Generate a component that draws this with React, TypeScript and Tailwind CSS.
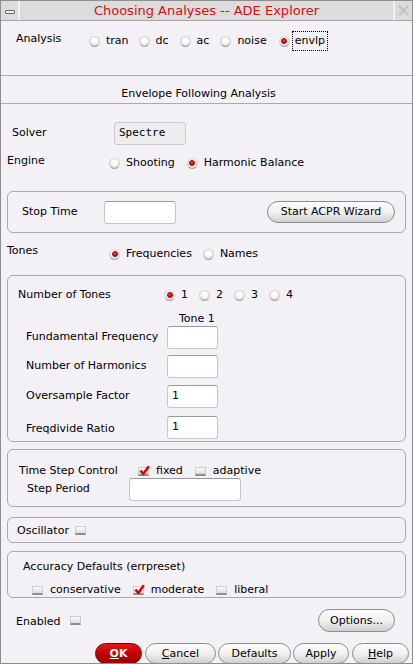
import React from 'react'

const Radio = ({ on }: { on?: boolean }) => (
  <span className="inline-flex h-[11px] w-[11px] shrink-0 items-center justify-center rounded-full border border-[#d2d2d2] border-b-[#a4a4a4] bg-[radial-gradient(circle_at_50%_35%,#ffffff_30%,#ececec_55%,#b4b4b4_100%)]">
    {on && <span className="h-[6px] w-[6px] rounded-full border border-[#8a0000] bg-[radial-gradient(circle_at_40%_35%,#ff4040,#d80000_70%)]" />}
  </span>
)

const Check = ({ on }: { on?: boolean }) => (
  <span className="relative inline-block h-[9px] w-[11px] shrink-0 border border-[#cdcdcd] border-b-2 border-b-[#8e8e8e] bg-gradient-to-b from-[#fbfbfb] to-[#dcdcdc]">
    {on && (
      <svg className="absolute left-[0px] top-[-3px]" width="11" height="11" viewBox="0 0 11 11">
        <path d="M1.5 5.5 L4.3 9 L9.8 1.2" stroke="#d80000" strokeWidth="2.4" fill="none" strokeLinejoin="round" />
      </svg>
    )}
  </span>
)

const Option = ({ on, label }: { on?: boolean; label: string }) => (
  <span className="flex items-center">
    <Radio on={on} />
    <span className="ml-[6px] leading-[14px]">{label}</span>
  </span>
)

const Box = ({ on, label }: { on?: boolean; label: string }) => (
  <span className="flex items-center">
    <Check on={on} />
    <span className="ml-[7px] leading-[14px]">{label}</span>
  </span>
)

const Field = ({ className, value }: { className: string; value?: string }) => (
  <div className={`flex h-[23px] items-center rounded-[3px] border border-[#c6c6c6] border-t-[#9a9a9a] bg-white pl-[4px] ${className}`}>
    {value}
  </div>
)

const Pill = ({ className, children }: { className: string; children: React.ReactNode }) => (
  <div className={`flex items-center justify-center rounded-full border border-[#8c8c8c] bg-gradient-to-b from-[#fdfdfd] via-[#f0f0f0] to-[#cfcfcf] leading-[14px] ${className}`}>
    {children}
  </div>
)

const Group = ({ className, children }: { className: string; children: React.ReactNode }) => (
  <div className={`ml-[6px] w-[399px] shrink-0 rounded-[6px] border border-[#a9a9a9] ${className}`}>{children}</div>
)

export default function App() {
  return (
    <div className="flex h-[664px] w-[413px] flex-col overflow-hidden border border-[#8e8e8e] bg-[#f4f1f6] font-['DejaVu_Sans',sans-serif] text-[11px] text-black">
      {/* title bar */}
      <div className="flex h-[20px] shrink-0 border-b border-[#a6a6a6] bg-[#dcdcdc]">
        <div className="flex w-[19px] items-center justify-center border-r-2 border-r-[#f2f2f2]">
          <span className="mt-[2px] h-[4px] w-[10px] rounded-[1px] border border-[#6e6e6e] bg-[#efefef]" />
        </div>
        <div className="flex flex-1 items-center justify-center text-[13px] text-[#d01010]">Choosing Analyses -- ADE Explorer</div>
        <div className="flex w-[19px] items-center justify-center border-l-2 border-l-[#f2f2f2]">
          <svg width="11" height="11" viewBox="0 0 11 11">
            <path d="M1 1 L10 10 M10 1 L1 10" stroke="#b8b8b8" strokeWidth="2.4" strokeDasharray="1.2 0.8" />
          </svg>
        </div>
      </div>

      {/* analysis */}
      <div className="flex h-[55px] shrink-0 items-start border-b border-[#ababab]">
        <div className="ml-[15px] mt-[11px] w-[73px] leading-[13px]">Analysis</div>
        <div className="mt-[10px] flex h-[20px] items-center">
          <Option label="tran" />
          <span className="w-[10px]" />
          <Option label="dc" />
          <span className="w-[11px]" />
          <Option label="ac" />
          <span className="w-[11px]" />
          <Option label="noise" />
          <span className="w-[12px]" />
          <Radio on />
          <span className="ml-[2px] flex h-[20px] items-center border border-dotted border-black px-[2px]">envlp</span>
        </div>
      </div>

      <div className="h-[28px] shrink-0 border-b border-[#ababab] pr-[16px] pt-[11px] text-center leading-[14px]">Envelope Following Analysis</div>

      {/* solver / engine */}
      <div className="mt-[18px] flex h-[23px] shrink-0 items-center pl-[11px]">
        <div className="w-[102px]">Solver</div>
        <div className="flex h-[23px] w-[72px] items-center rounded-[3px] border border-[#c9c9c9] bg-[#ededed] pl-[4px] font-['DejaVu_Sans_Mono',monospace]">Spectre</div>
      </div>
      <div className="mt-[9px] flex h-[16px] shrink-0 items-start pl-[6px]">
        <div className="w-[102px] leading-[14px]">Engine</div>
        <div className="mt-[2px] flex items-center">
          <Option label="Shooting" />
          <span className="w-[12px]" />
          <Option on label="Harmonic Balance" />
        </div>
      </div>

      <Group className="mt-[21px] flex h-[42px] items-center pl-[14px] pr-[10px]">
        <div className="w-[82px]">Stop Time</div>
        <Field className="w-[72px]" />
        <Pill className="ml-auto h-[22px] w-[128px]">Start ACPR Wizard</Pill>
      </Group>

      {/* tones */}
      <div className="mt-[11px] flex h-[17px] shrink-0 items-start pl-[6px]">
        <div className="w-[102px] leading-[14px]">Tones</div>
        <div className="mt-[3px] flex items-center">
          <Option on label="Frequencies" />
          <span className="w-[11px]" />
          <Option label="Names" />
        </div>
      </div>

      <Group className="mt-[14px] h-[167px] pl-[10px]">
        <div className="mt-[12px] flex h-[14px] items-center">
          <div className="w-[146px]">Number of Tones</div>
          <Option on label="1" />
          <span className="w-[11px]" />
          <Option label="2" />
          <span className="w-[11px]" />
          <Option label="3" />
          <span className="w-[11px]" />
          <Option label="4" />
        </div>
        <div className="ml-[161px] mt-[10px] leading-[14px]">Tone 1</div>
        <div className="flex items-center pl-[8px]">
          <div className="w-[141px]">Fundamental Frequency</div>
          <Field className="w-[51px]" />
        </div>
        <div className="mt-[6px] flex items-center pl-[8px]">
          <div className="w-[141px]">Number of Harmonics</div>
          <Field className="w-[51px]" />
        </div>
        <div className="mt-[7px] flex items-center pl-[8px]">
          <div className="w-[141px]">Oversample Factor</div>
          <Field className="w-[51px]" value="1" />
        </div>
        <div className="mt-[8px] flex items-center pl-[8px]">
          <div className="mt-[3px] w-[141px]">Freqdivide Ratio</div>
          <Field className="w-[51px]" value="1" />
        </div>
      </Group>

      <Group className="mt-[7px] h-[58px]">
        <div className="mt-[14px] flex h-[14px] items-center pl-[11px]">
          <div className="w-[119px]">Time Step Control</div>
          <Box on label="fixed" />
          <span className="w-[12px]" />
          <Box label="adaptive" />
        </div>
        <div className="flex items-center pl-[19px]">
          <div className="w-[102px]">Step Period</div>
          <Field className="w-[112px]" />
        </div>
      </Group>

      <Group className="mt-[10px] flex h-[26px] items-center pl-[9px]">
        <span className="mt-[2px]">Oscillator</span>
        <span className="ml-[6px] mt-[4px]">
          <Check />
        </span>
      </Group>

      <Group className="mt-[8px] h-[47px]">
        <div className="ml-[15px] mt-[8px] leading-[14px]">Accuracy Defaults (errpreset)</div>
        <div className="ml-[24px] mt-[9px] flex h-[14px] items-center">
          <Box label="conservative" />
          <span className="w-[12px]" />
          <Box on label="moderate" />
          <span className="w-[12px]" />
          <Box label="liberal" />
        </div>
      </Group>

      <div className="mt-[11px] flex h-[23px] shrink-0 items-center pl-[15px] pr-[17px]">
        <span className="mt-[3px]">Enabled</span>
        <span className="ml-[10px] mt-[4px]">
          <Check />
        </span>
        <Pill className="ml-auto h-[23px] w-[77px]">Options...</Pill>
      </div>

      <div className="mt-[11px] flex h-[21px] shrink-0 justify-end gap-[2px] pr-[3px]">
        <div className="flex h-[21px] w-[47px] items-center justify-center rounded-full border border-[#7a0000] bg-gradient-to-b from-[#e01818] via-[#c80000] to-[#9c0000] font-bold leading-[14px] text-white">
          <span className="underline">O</span>K
        </div>
        <Pill className="ml-[1px] h-[21px] w-[71px]">
          <span className="underline">C</span>ancel
        </Pill>
        <Pill className="h-[21px] w-[73px]">Defaults</Pill>
        <Pill className="h-[21px] w-[56px]">Apply</Pill>
        <Pill className="ml-[1px] h-[21px] w-[57px]">
          <span className="underline">H</span>elp
        </Pill>
      </div>
    </div>
  )
}
